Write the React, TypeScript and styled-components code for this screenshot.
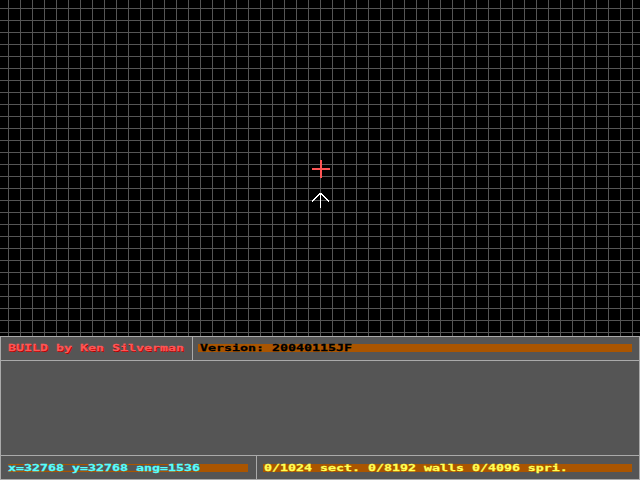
import React from "react";
import styled, { createGlobalStyle } from "styled-components";

const Global = createGlobalStyle`
  html, body { margin: 0; padding: 0; background: #000; }
  body { width: 640px; height: 480px; overflow: hidden; }
`;

const Screen = styled.div`
  width: 640px;
  height: 480px;
  display: flex;
  flex-direction: column;
  background: #000;
`;

const MapView = styled.div`
  position: relative;
  height: 336px;
  flex: none;
  background-color: #000;
  background-image:
    linear-gradient(to right, #555555 1px, transparent 1px),
    linear-gradient(to bottom, #555555 1px, transparent 1px);
  background-size: 12px 12px;
  background-position: 8px 8px;
`;

const Overlay = styled.svg`
  position: absolute;
  left: 0;
  top: 0;
  width: 640px;
  height: 336px;
  shape-rendering: crispEdges;
`;

const Panel = styled.div`
  box-sizing: border-box;
  height: 144px;
  flex: none;
  background: #555555;
  border: 1px solid #aaaaaa;
  display: flex;
  flex-direction: column;
`;

const Row = styled.div<{ $cols: string; $top: "top" | "bottom" }>`
  box-sizing: border-box;
  height: 24px;
  flex: none;
  display: grid;
  grid-template-columns: ${(p) => p.$cols};
  ${(p) =>
    p.$top === "top"
      ? "border-bottom: 1px solid #aaaaaa;"
      : "border-top: 1px solid #aaaaaa;"}
`;

const Cell = styled.div<{ $padTop: number; $padLeft: number; $divider?: boolean }>`
  box-sizing: border-box;
  padding-top: ${(p) => p.$padTop}px;
  padding-left: ${(p) => p.$padLeft}px;
  ${(p) => (p.$divider ? "border-left: 1px solid #aaaaaa;" : "")}
  display: flex;
  align-items: flex-start;
  overflow: hidden;
`;

const Middle = styled.div`
  flex: 1;
`;

const Field = styled.div<{ $width: number; $padLeft?: number }>`
  width: ${(p) => p.$width}px;
  height: 8px;
  padding-left: ${(p) => p.$padLeft ?? 0}px;
  box-sizing: border-box;
  background: #aa5500;
  display: flex;
  flex: none;
`;

const Text = styled.span<{ $color: string; $shadow?: string; $bg?: string }>`
  display: block;
  height: 8px;
  line-height: 8px;
  font-family: "DejaVu Sans Mono", "Liberation Mono", monospace;
  font-weight: bold;
  font-size: 13.29px;
  white-space: pre;
  color: ${(p) => p.$color};
  -webkit-text-stroke: 0.35px ${(p) => p.$color};
  background: ${(p) => p.$bg ?? "transparent"};
  transform: scaleY(0.72);
  transform-origin: 50% 3.75px;
  ${(p) => (p.$shadow ? `text-shadow: 1px 1.4px 0 ${p.$shadow};` : "")}
`;

export default function App() {
  return (
    <>
      <Global />
      <Screen>
        <MapView>
          <Overlay viewBox="0 0 640 336">
            <rect x="312" y="168" width="18" height="2" fill="#ff5555" />
            <rect x="320" y="160" width="2" height="18" fill="#ff5555" />
            <g stroke="#ffffff" strokeWidth="1" fill="none">
              <line x1="320.5" y1="193" x2="320.5" y2="208" />
              <line x1="320.5" y1="193" x2="312" y2="201.5" />
              <line x1="320.5" y1="193" x2="329" y2="201.5" />
            </g>
          </Overlay>
        </MapView>
        <Panel>
          <Row $cols="191px 1fr" $top="top">
            <Cell $padTop={7} $padLeft={7}>
              <Text $color="#ff5555" $shadow="#aa0000">BUILD by Ken Silverman</Text>
            </Cell>
            <Cell $padTop={7} $padLeft={5} $divider>
              <Field $width={434} $padLeft={2}>
                <Text $color="#000000">Version: 20040115JF</Text>
              </Field>
            </Cell>
          </Row>
          <Middle />
          <Row $cols="255px 1fr" $top="bottom">
            <Cell $padTop={8} $padLeft={7}>
              <Field $width={240}>
                <Text $color="#55ffff" $bg="#555555">x=32768 y=32768 ang=1536</Text>
              </Field>
            </Cell>
            <Cell $padTop={8} $padLeft={6} $divider>
              <Field $width={369} $padLeft={1}>
                <Text $color="#ffff55">0/1024 sect. 0/8192 walls 0/4096 spri.</Text>
              </Field>
            </Cell>
          </Row>
        </Panel>
      </Screen>
    </>
  );
}
